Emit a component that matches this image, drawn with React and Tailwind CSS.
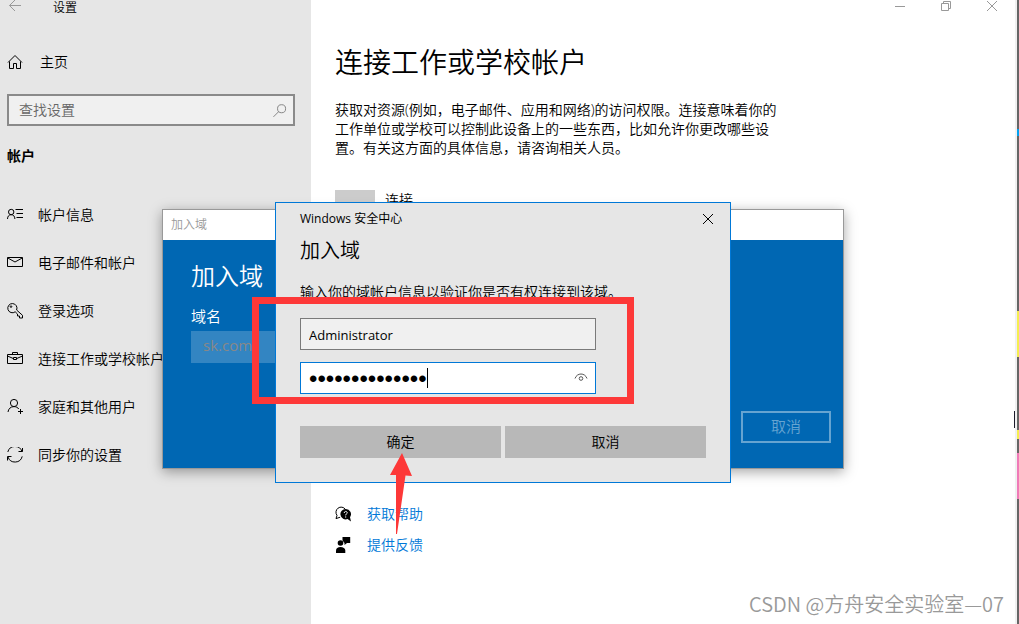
import React, { useState } from "react";

const svgProps = {
  width: 16,
  height: 16,
  viewBox: "0 0 16 16",
  fill: "none",
  stroke: "currentColor",
  "aria-hidden": true,
};

function AccountInfoIcon() {
  return (
    <svg {...svgProps}>
      <circle cx="4.2" cy="5" r="2.7" />
      <path d="M0.5 12C0.6 9.2 2 7.7 4.2 7.7S7.8 9.2 7.9 12" />
      <path d="M8.5 2.5H16M9.5 6.5H16M9.5 10.5H16" />
    </svg>
  );
}

function MailIcon() {
  return (
    <svg {...svgProps}>
      <path d="M0.5 2.5H15.5V11.5H0.5Z" />
      <path d="M0.8 3L8 7L15.2 3" />
    </svg>
  );
}

function KeyIcon() {
  return (
    <svg {...svgProps}>
      <path d="M9.6 7L15.5 12.3V15H12.5V13H10.5V11L8.2 8.8A4.6 4.6 0 1 1 9.6 7Z" />
      <circle cx="4" cy="3.6" r="0.8" />
    </svg>
  );
}

function BriefcaseIcon() {
  return (
    <svg {...svgProps}>
      <path d="M0.5 3.5H15.5V12.5H0.5Z" />
      <path d="M5.5 3.5V1.5H10.5V3.5" />
      <path d="M0.5 5L6.5 7.6M9.5 7.6L15.5 5" />
      <path d="M6.5 6.5H9.5V8.5H6.5Z" />
    </svg>
  );
}

function FamilyIcon() {
  return (
    <svg {...svgProps}>
      <circle cx="7" cy="4" r="3.6" />
      <path d="M1 13C1.4 9.8 3.6 7.6 7 7.6C9.2 7.6 10.8 8.6 11.8 10" />
      <path d="M13.5 10V15M11 12.5H16" />
    </svg>
  );
}

function SyncIcon() {
  return (
    <svg {...svgProps}>
      <path d="M0.8 5A7.4 7.4 0 0 1 15 4.6M15.2 9.4A7.4 7.4 0 0 1 1 10" />
      <path d="M15.5 1V4.5H11.5M0.5 13.5V9.5H4.5" />
    </svg>
  );
}

function HelpIcon() {
  return (
    <svg {...svgProps}>
      <path d="M5.2 11.2L1 12.6L2 9.4A5 5 0 1 1 10.3 3.2" />
      <path
        d="M10.8 3A5.2 5.2 0 1 0 12.6 13L16 15.5L15 11.2A5.2 5.2 0 0 0 10.8 3Z"
        fill="currentColor"
        stroke="none"
      />
      <path d="M9.2 7C9.2 4.8 12.4 5 12.2 7C12 8 10.7 8 10.7 9.4M10.7 10.4V11.6" stroke="#fff" />
    </svg>
  );
}

function FeedbackIcon() {
  return (
    <svg {...svgProps} fill="currentColor" stroke="none">
      <path d="M7.5 0H15.2V6H12L9.5 8V6L7.5 3.5Z" />
      <circle cx="5.5" cy="6" r="2.8" />
      <path d="M1 16V13.5C1 11.3 2.8 10 5.5 10S10.3 11.3 10.3 13.5V16Z" />
    </svg>
  );
}

function CloseIcon() {
  return (
    <svg {...svgProps} width="10" height="10" viewBox="0 0 10 10">
      <path d="M0 0L10 10M10 0L0 10" />
    </svg>
  );
}

const navItems = [
  { label: "帐户信息", icon: AccountInfoIcon },
  { label: "电子邮件和帐户", icon: MailIcon },
  { label: "登录选项", icon: KeyIcon },
  { label: "连接工作或学校帐户", icon: BriefcaseIcon },
  { label: "家庭和其他用户", icon: FamilyIcon },
  { label: "同步你的设置", icon: SyncIcon },
];

function Sidebar() {
  return (
    <aside className="w-[311px] shrink-0 bg-[#e6e6e6] px-[7px]">
      <header className="flex h-4 items-start">
        <button type="button" aria-label="返回" className="ml-0.5 w-11 text-[#999]">
          <svg {...svgProps} width="12" height="12" viewBox="0 0 12 12">
            <path d="M12 5.5H0.5M6 0L0.5 5.5L6 11" />
          </svg>
        </button>
        <span className="text-xs leading-4">设置</span>
      </header>

      <a href="#home" className="mt-[22px] flex h-12 items-center gap-[17px]">
        <svg {...svgProps}>
          <path d="M1 8.5L8 1.5L15 8.5M2.5 7.5V14.5H6.5V9.5H9.5V14.5H13.5V7.5" />
        </svg>
        <span>主页</span>
      </a>

      <div className="relative mt-2">
        <input
          type="text"
          aria-label="查找设置"
          placeholder="查找设置"
          className="block h-8 w-[288px] border-2 border-[#8a8a8a] bg-[#f0f0f0] px-2.5 pb-0.5 outline-none placeholder:text-[#666]"
        />
        <svg {...svgProps} width="14" height="14" className="absolute top-2.5 left-[266px] text-[#777]">
          <circle cx="9.8" cy="5.4" r="4.6" />
          <path d="M6.5 8.7L0.5 14.7" />
        </svg>
      </div>

      <h2 className="mt-5 leading-5 font-bold">帐户</h2>

      <nav className="mt-[25px]">
        {navItems.map(({ label, icon: Icon }) => (
          <a key={label} href="#settings" className="flex h-12 items-center gap-[15px]">
            <Icon />
            <span>{label}</span>
          </a>
        ))}
      </nav>
    </aside>
  );
}

function WindowControls() {
  return (
    <div className="flex h-3 items-center justify-end gap-9 pr-[18px] text-[#999]">
      <button type="button" aria-label="最小化">
        <svg {...svgProps} width="10" height="10" viewBox="0 0 10 10">
          <path d="M0 5.5H10" />
        </svg>
      </button>
      <button type="button" aria-label="还原">
        <svg {...svgProps} width="10" height="10" viewBox="0 0 10 10">
          <path d="M0.5 2.5H7.5V9.5H0.5ZM2.5 2.5V0.5H9.5V7.5H7.5" />
        </svg>
      </button>
      <button type="button" aria-label="关闭">
        <CloseIcon />
      </button>
    </div>
  );
}

function MainContent() {
  return (
    <main className="flex-1 bg-white">
      <WindowControls />
      <div className="px-6">
        <h1 className="mt-8 text-[28px] leading-9">连接工作或学校帐户</h1>
        <p className="mt-5 max-w-[446px] leading-[19px]">
          获取对资源(例如，电子邮件、应用和网络)的访问权限。连接意味着你的工作单位或学校可以控制此设备上的一些东西，比如允许你更改哪些设置。有关这方面的具体信息，请咨询相关人员。
        </p>
        <button type="button" className="mt-[33px] flex items-start gap-2.5 leading-5">
          <span className="size-10 bg-[#ccc]" />
          连接
        </button>
        <div className="mt-[274px] flex flex-col gap-[11px] leading-5">
          <a href="#help" className="flex items-center gap-4">
            <HelpIcon />
            <span className="text-[#0078d7]">获取帮助</span>
          </a>
          <a href="#feedback" className="flex items-center gap-4">
            <FeedbackIcon />
            <span className="text-[#0078d7]">提供反馈</span>
          </a>
        </div>
      </div>
    </main>
  );
}

// narrow slice of the desktop that shows past the window edge
function DesktopEdge() {
  return (
    <div className="w-1 shrink-0 border-l-2 border-[#f0f0f0] bg-[#666]">
      <div className="mt-[129px] h-[7px] bg-[#00a2f2]" />
      <div className="mt-[175px] h-[46px] bg-[#f5ee50]" />
      <div className="mt-[73px] h-[9px] bg-[#f5ee50]" />
      <div className="mt-3.5 h-[46px] bg-[#f07ab8]" />
    </div>
  );
}

function JoinDomainWindow() {
  return (
    <section className="absolute top-[209px] left-[162px] flex h-[260px] w-[682px] flex-col border border-[#999] bg-[#0067b3] text-white shadow-[0_3px_12px_rgba(0,0,0,0.35)]">
      <header className="flex h-[30px] items-center bg-white px-2 text-xs text-[#999]">加入域</header>
      <div className="flex flex-1 flex-col pt-5 pr-3 pb-[25px] pl-7 text-[15px]">
        <h2 className="text-2xl leading-8">加入域</h2>
        <label htmlFor="domain" className="mt-3.5 leading-5">
          域名
        </label>
        <input
          id="domain"
          type="text"
          defaultValue="sk.com"
          disabled
          className="mt-[5px] h-8 w-[300px] bg-white/20 px-3 pb-1 font-normal text-[#888]"
        />
        <button
          type="button"
          disabled
          className="mt-auto h-8 w-[90px] self-end border-2 border-[#66a4d1] text-[#66a4d1]"
        >
          取消
        </button>
      </div>
    </section>
  );
}

function SecurityDialog() {
  const [username, setUsername] = useState("Administrator");
  const [password, setPassword] = useState("12345678901234");

  return (
    <form
      onSubmit={(e) => e.preventDefault()}
      className="absolute top-[202px] left-[275px] w-[456px] border border-[#0078d7] bg-[#e6e6e6] px-6 pb-6"
    >
      <header className="flex h-8 items-center justify-between text-xs font-normal">
        <span>Windows 安全中心</span>
        <button type="button" aria-label="关闭" className="mr-[-7px]">
          <CloseIcon />
        </button>
      </header>
      <h2 className="text-xl leading-8">加入域</h2>
      <p className="mt-[15px] leading-5">输入你的域帐户信息以验证你是否有权连接到该域。</p>

      <input
        type="text"
        aria-label="用户名"
        value={username}
        onChange={(e) => setUsername(e.target.value)}
        className="mt-4 block h-8 w-[296px] border border-[#7a7a7a] bg-[#f0f0f0] px-2 pt-0.5 text-[13px] font-normal outline-none"
      />
      <div className="relative mt-3 w-[296px]">
        <input
          type="password"
          aria-label="密码"
          value={password}
          onChange={(e) => setPassword(e.target.value)}
          className="block h-8 w-full border border-[#0078d7] bg-white px-2 pt-0.5 font-['Liberation_Sans',sans-serif] text-2xl outline-none"
        />
        <span className="absolute top-1.5 left-[127px] h-5 w-px bg-black" />
        <button type="button" aria-label="显示密码" className="absolute top-2.5 right-2 text-[#555]">
          <svg {...svgProps} width="14" height="12" viewBox="0 0 14 12">
            <path d="M1 6.5C2 3.5 4.5 2 7 2S12 3.5 13 6.5" />
            <circle cx="7" cy="6.5" r="1.8" />
          </svg>
        </button>
      </div>

      <div className="mt-8 grid grid-cols-2 gap-1">
        <button type="submit" className="h-8 bg-[#b8b8b8]">
          确定
        </button>
        <button type="button" className="h-8 bg-[#b8b8b8]">
          取消
        </button>
      </div>
    </form>
  );
}

export default function App() {
  return (
    <div className="relative flex min-h-screen overflow-hidden font-['Open_Sans','Noto_Sans_CJK_SC',sans-serif] text-sm font-[350] text-black">
      <Sidebar />
      <MainContent />
      <DesktopEdge />

      <JoinDomainWindow />
      <SecurityDialog />

      {/* red marks over the dialog */}
      <div className="pointer-events-none absolute top-[297px] left-[252px] h-[107px] w-[382px] border-7 border-[#fd3838]" />
      <svg
        width="24"
        height="82"
        viewBox="0 0 24 82"
        fill="#fd3838"
        aria-hidden="true"
        className="pointer-events-none absolute top-[452px] left-[389px]"
      >
        <path d="M13 1L23 24L16.5 23.5L8 82H7L7 23H1Z" />
      </svg>

      <div className="absolute top-[411px] right-1 h-[17px] w-px bg-[#1a1a2a]" />
      <div className="absolute right-[15px] bottom-2 font-['Noto_Sans_CJK_SC',sans-serif] text-xl leading-6 font-[350] text-[#999] [text-shadow:1px_1px_1px_#fff]">
        CSDN @方舟安全实验室—07
      </div>
    </div>
  );
}
